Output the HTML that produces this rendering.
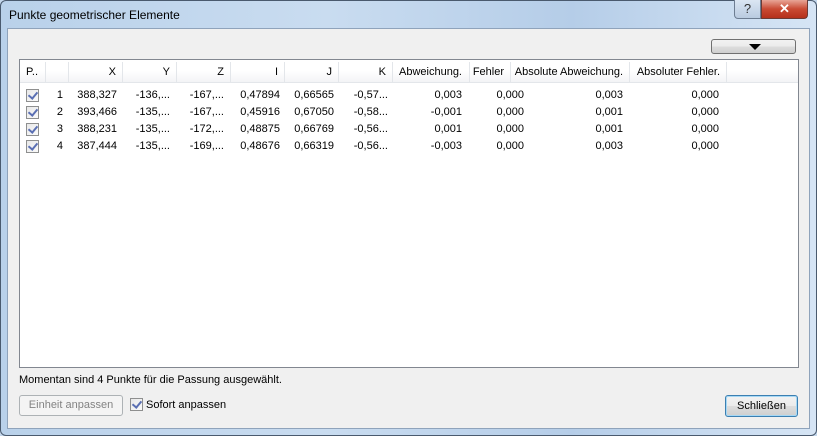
<!DOCTYPE html>
<html><head><style>
*{margin:0;padding:0;box-sizing:border-box}
body{width:817px;height:436px;overflow:hidden;background:#c4d7ec;font-family:"Liberation Sans",sans-serif;font-size:11px;color:#000;position:relative}
.frame{position:absolute;left:0;top:0;width:817px;height:436px;border:1px solid #4a5a6e;border-radius:6px;background:linear-gradient(90deg,#b9d1ea,#c9dcf0 40%,#b5cde8 70%,#d6e5f5)}
.title{position:absolute;left:9px;top:8px;font-size:12px;color:#000}
.client{position:absolute;left:7px;top:28px;width:803px;height:401px;background:#f0f0f0;border:1px solid #8fa3bb}
.abs{position:absolute}
.list{position:absolute;left:19px;top:59px;width:780px;height:309px;background:#fff;border:1px solid #828790}
.hdr{position:absolute;left:0;top:0;height:23px;width:778px;background:linear-gradient(#fff,#fff 50%,#f3f4f6);border-bottom:1px solid #e3e6ea}
.sep{position:absolute;top:2px;width:1px;height:20px;background:#e3e6ea}
.h,.c{position:absolute;white-space:nowrap}
.h{top:6px}
.cb{position:absolute;width:13px;height:13px;border:1px solid #8e8f8f;background:linear-gradient(135deg,#e8e8e8,#fafafa)}
.cb:after{content:"";position:absolute;left:3px;top:0px;width:4px;height:7px;border:solid #5a6fb3;border-width:0 2px 2px 0;transform:rotate(40deg)}
.btn{position:absolute;border:1px solid #707070;border-radius:3px;background:linear-gradient(#f2f2f2,#ebebeb 50%,#dddddd 51%,#cfcfcf);text-align:center}
</style></head><body>
<div class="frame"></div>
<div class="title">Punkte geometrischer Elemente</div>
<div class="abs" style="left:734px;top:0;width:27px;height:19px;border:1px solid #6d7d92;border-top:none;border-radius:0 0 0 4px;background:linear-gradient(#dbe6f3,#b9cbe0);text-align:center;font-size:13px;color:#333;line-height:17px">?</div>
<div class="abs" style="left:761px;top:0;width:47px;height:19px;border:1px solid #6d3a34;border-top:none;border-radius:0 0 4px 0;background:linear-gradient(#e8a596,#c94a33 50%,#b5301b);text-align:center;color:#fff;font-weight:bold;font-size:13px;line-height:17px">✕</div>
<div class="client"></div>
<div class="btn" style="left:711px;top:39px;width:85px;height:15px"><div style="position:absolute;left:37px;top:4px;border-left:6px solid transparent;border-right:6px solid transparent;border-top:6px solid #000"></div></div>
<div class="list">
<div class="hdr">
<div class="sep" style="left:25px"></div><div class="sep" style="left:48px"></div><div class="sep" style="left:102px"></div><div class="sep" style="left:156px"></div><div class="sep" style="left:210px"></div><div class="sep" style="left:264px"></div><div class="sep" style="left:318px"></div><div class="sep" style="left:372px"></div><div class="sep" style="left:449px"></div><div class="sep" style="left:490px"></div><div class="sep" style="left:609px"></div><div class="sep" style="left:706px"></div>
<div class="h" style="left:6px">P..</div>
<div class="h" style="right:682px">X</div>
<div class="h" style="right:628px">Y</div>
<div class="h" style="right:574px">Z</div>
<div class="h" style="right:520px">I</div>
<div class="h" style="right:466px">J</div>
<div class="h" style="right:412px">K</div>
<div class="h" style="right:336px">Abweichung.</div>
<div class="h" style="right:294px">Fehler</div>
<div class="h" style="right:175px">Absolute Abweichung.</div>
<div class="h" style="right:78px">Absoluter Fehler.</div>
</div>
<div style="position:absolute;left:0;top:29px;width:778px">
<div style="position:absolute;top:0;left:0;width:778px;height:17px">
<div class="cb" style="left:6px;top:0px"></div>
<div class="c" style="right:735px">1</div><div class="c" style="right:681px">388,327</div><div class="c" style="right:628px">-136,...</div><div class="c" style="right:574px">-167,...</div><div class="c" style="right:518px">0,47894</div><div class="c" style="right:464px">0,66565</div><div class="c" style="right:410px">-0,57...</div><div class="c" style="right:336px">0,003</div><div class="c" style="right:274px">0,000</div><div class="c" style="right:175px">0,003</div><div class="c" style="right:79px">0,000</div></div>
<div style="position:absolute;top:17px;left:0;width:778px;height:17px">
<div class="cb" style="left:6px;top:0px"></div>
<div class="c" style="right:735px">2</div><div class="c" style="right:681px">393,466</div><div class="c" style="right:628px">-135,...</div><div class="c" style="right:574px">-167,...</div><div class="c" style="right:518px">0,45916</div><div class="c" style="right:464px">0,67050</div><div class="c" style="right:410px">-0,58...</div><div class="c" style="right:336px">-0,001</div><div class="c" style="right:274px">0,000</div><div class="c" style="right:175px">0,001</div><div class="c" style="right:79px">0,000</div></div>
<div style="position:absolute;top:34px;left:0;width:778px;height:17px">
<div class="cb" style="left:6px;top:0px"></div>
<div class="c" style="right:735px">3</div><div class="c" style="right:681px">388,231</div><div class="c" style="right:628px">-135,...</div><div class="c" style="right:574px">-172,...</div><div class="c" style="right:518px">0,48875</div><div class="c" style="right:464px">0,66769</div><div class="c" style="right:410px">-0,56...</div><div class="c" style="right:336px">0,001</div><div class="c" style="right:274px">0,000</div><div class="c" style="right:175px">0,001</div><div class="c" style="right:79px">0,000</div></div>
<div style="position:absolute;top:51px;left:0;width:778px;height:17px">
<div class="cb" style="left:6px;top:0px"></div>
<div class="c" style="right:735px">4</div><div class="c" style="right:681px">387,444</div><div class="c" style="right:628px">-135,...</div><div class="c" style="right:574px">-169,...</div><div class="c" style="right:518px">0,48676</div><div class="c" style="right:464px">0,66319</div><div class="c" style="right:410px">-0,56...</div><div class="c" style="right:336px">-0,003</div><div class="c" style="right:274px">0,000</div><div class="c" style="right:175px">0,003</div><div class="c" style="right:79px">0,000</div></div>
</div>
</div>
<div class="abs" style="left:19px;top:374px">Momentan sind 4 Punkte für die Passung ausgewählt.</div>
<div class="abs" style="left:19px;top:395px;width:104px;height:21px;border:1px solid #adb2b5;border-radius:3px;background:#f4f4f4;color:#838383;text-align:center;line-height:19px">Einheit anpassen</div>
<div class="cb" style="left:130px;top:398px"></div>
<div class="abs" style="left:146px;top:399px">Sofort anpassen</div>
<div class="btn" style="left:725px;top:395px;width:73px;height:22px;border-color:#3c7fb1;line-height:20px;box-shadow:inset 0 0 0 1px #a6d8f5">Schließen</div>
</body></html>
